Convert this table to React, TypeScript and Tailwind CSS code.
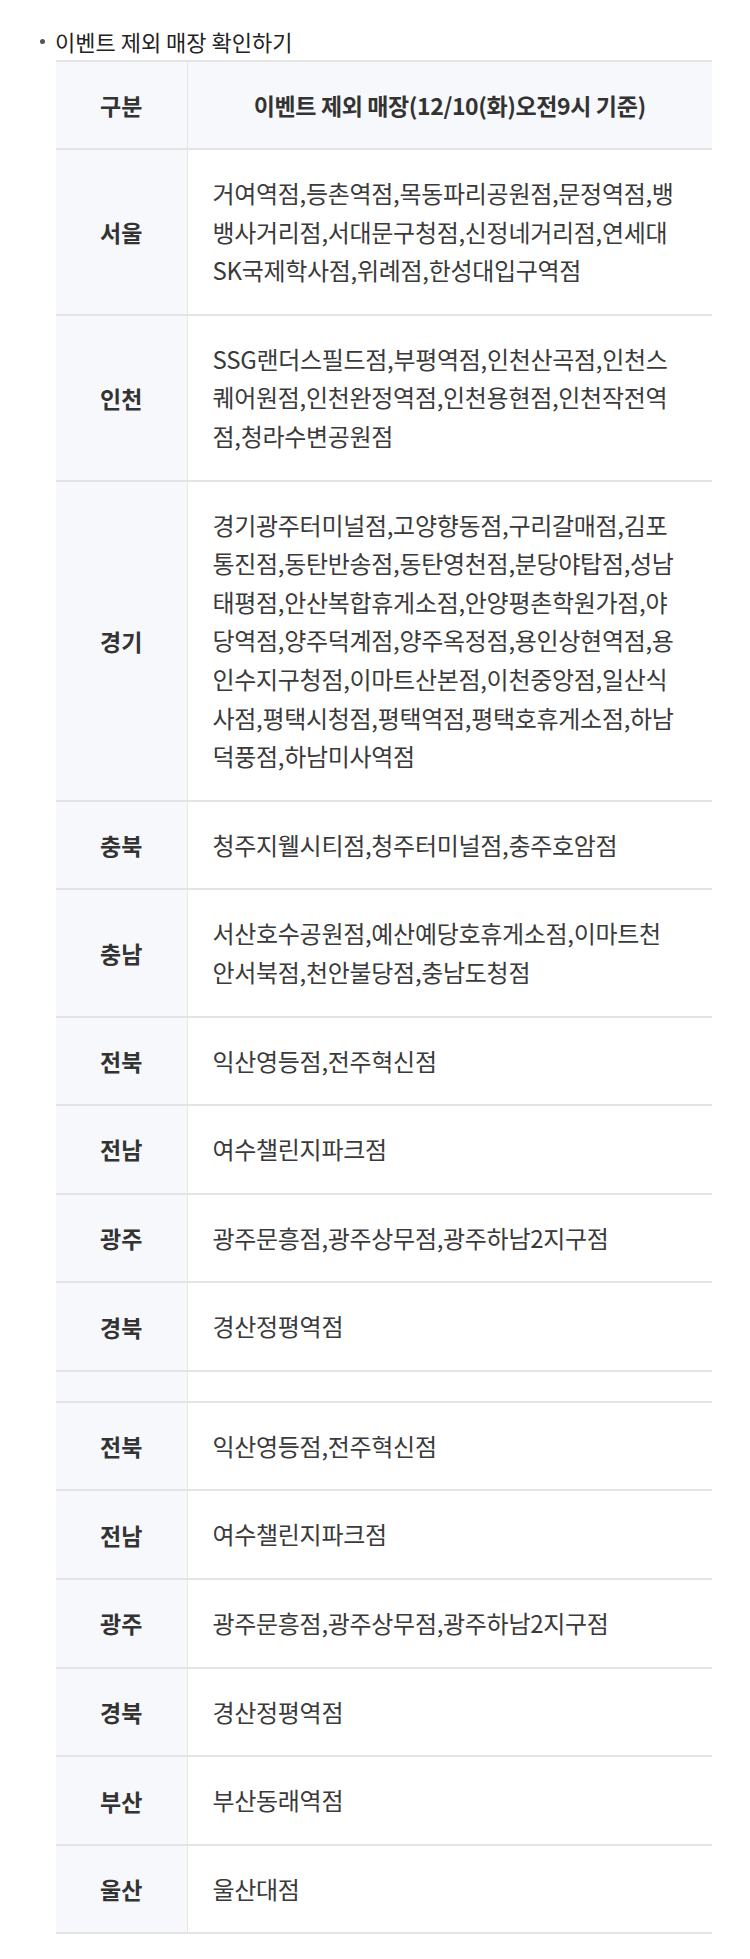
type Row = { region: string; stores: string[] };

const rows: Row[] = [
  {
    region: "서울",
    stores: [
      "거여역점,등촌역점,목동파리공원점,문정역점,뱅",
      "뱅사거리점,서대문구청점,신정네거리점,연세대",
      "SK국제학사점,위례점,한성대입구역점",
    ],
  },
  {
    region: "인천",
    stores: [
      "SSG랜더스필드점,부평역점,인천산곡점,인천스",
      "퀘어원점,인천완정역점,인천용현점,인천작전역",
      "점,청라수변공원점",
    ],
  },
  {
    region: "경기",
    stores: [
      "경기광주터미널점,고양향동점,구리갈매점,김포",
      "통진점,동탄반송점,동탄영천점,분당야탑점,성남",
      "태평점,안산복합휴게소점,안양평촌학원가점,야",
      "당역점,양주덕계점,양주옥정점,용인상현역점,용",
      "인수지구청점,이마트산본점,이천중앙점,일산식",
      "사점,평택시청점,평택역점,평택호휴게소점,하남",
      "덕풍점,하남미사역점",
    ],
  },
  { region: "충북", stores: ["청주지웰시티점,청주터미널점,충주호암점"] },
  {
    region: "충남",
    stores: ["서산호수공원점,예산예당호휴게소점,이마트천", "안서북점,천안불당점,충남도청점"],
  },
  { region: "전북", stores: ["익산영등점,전주혁신점"] },
  { region: "전남", stores: ["여수챌린지파크점"] },
  { region: "광주", stores: ["광주문흥점,광주상무점,광주하남2지구점"] },
  { region: "경북", stores: ["경산정평역점"] },
  { region: "", stores: [] },
  { region: "전북", stores: ["익산영등점,전주혁신점"] },
  { region: "전남", stores: ["여수챌린지파크점"] },
  { region: "광주", stores: ["광주문흥점,광주상무점,광주하남2지구점"] },
  { region: "경북", stores: ["경산정평역점"] },
  { region: "부산", stores: ["부산동래역점"] },
  { region: "울산", stores: ["울산대점"] },
];

export default function App() {
  return (
    <div
      className="min-h-[1959px] bg-white pt-[28px] text-[#333]"
      style={{ fontFamily: '"Noto Sans CJK KR", "Noto Sans", sans-serif' }}
    >
      <div className="flex items-center pl-[40px] text-[22px] leading-[26px] text-[#222]">
        <span className="mr-[10px] h-[5px] w-[5px] rounded-full bg-[#555]" />
        <span>이벤트 제외 매장 확인하기</span>
      </div>

      <table className="mt-[6px] ml-[56px] w-[656px] table-fixed border-collapse border-t-2 border-[#e4e4e4]">
        <colgroup>
          <col className="w-[131px]" />
          <col />
        </colgroup>
        <thead>
          <tr className="border-b-2 border-[#e4e4e4] bg-[#f7f8fb]">
            <th className="border-r border-[#e6e6e6] py-[24px] text-center text-[23px] leading-[38px] font-bold">
              구분
            </th>
            <th className="py-[24px] text-center text-[23px] leading-[38px] font-bold tracking-[-0.4px]">
              이벤트 제외 매장(12/10(화)오전9시 기준)
            </th>
          </tr>
        </thead>
        <tbody>
          {rows.map((row, i) => {
            const empty = row.stores.length === 0;
            return (
              <tr key={i} className="border-b-2 border-[#e4e4e4]">
                <td
                  className={
                    empty
                      ? "h-[31px] border-r border-[#e6e6e6] bg-[#f7f8fb] p-0"
                      : "border-r border-[#e6e6e6] bg-[#f7f8fb] py-[24px] text-center align-middle text-[23px] leading-[38px] font-bold"
                  }
                >
                  {row.region}
                </td>
                <td
                  className={
                    empty
                      ? "h-[31px] p-0"
                      : "py-[24px] pl-[25px] pr-[10px] align-middle text-[24px] leading-[38.6px] tracking-[-0.3px] whitespace-nowrap text-[#3a3a3a]"
                  }
                >
                  {row.stores.map((line, j) => (
                    <div key={j}>{line}</div>
                  ))}
                </td>
              </tr>
            );
          })}
        </tbody>
      </table>
    </div>
  );
}
